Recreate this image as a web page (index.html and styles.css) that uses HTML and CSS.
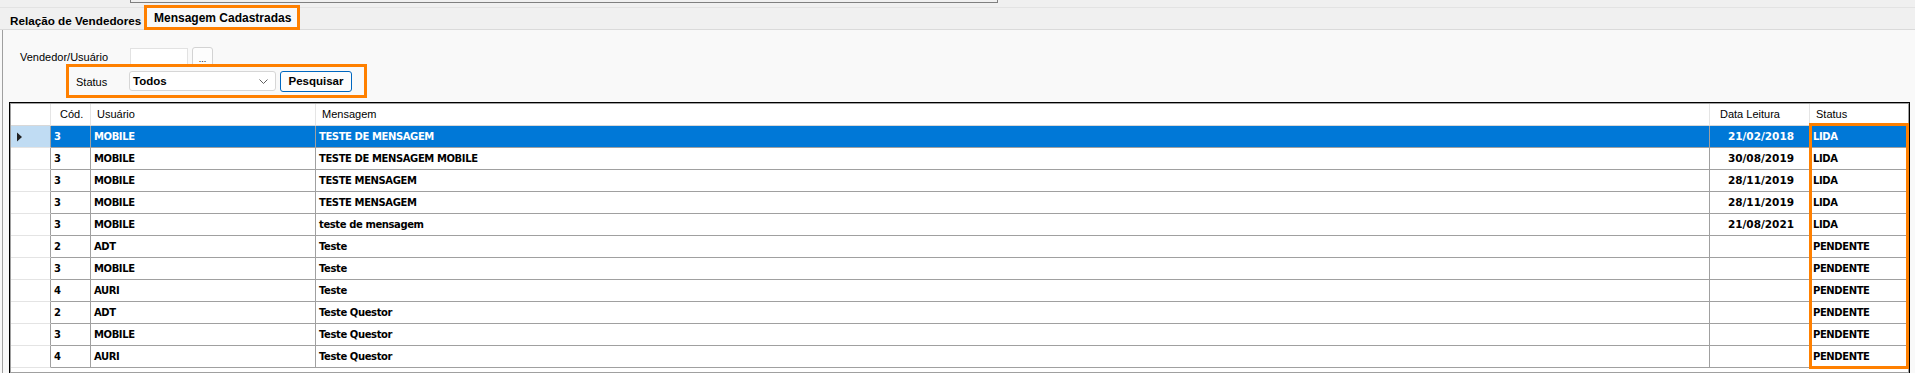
FILE: index.html
```html
<!DOCTYPE html>
<html lang="pt-BR">
<head>
    <meta charset="UTF-8">
    <meta name="viewport" content="width=device-width, initial-scale=1.0">
    <title>Mensagens Cadastradas</title>
    <link rel="stylesheet" href="styles.css">
</head>
<body>
    <div class="topbar"><div class="topbox"></div></div>

    <div class="tabs">
        <div class="tab">Relação de Vendedores</div>
        <div class="tab active">Mensagem Cadastradas</div>
    </div>

    <div class="panel">
        <div class="vendor-row">
            <label class="vendor-label">Vendedor/Usuário</label>
            <input class="text-input" type="text">
            <button class="dots">...</button>
        </div>

        <div class="status-row">
            <label class="status-label">Status</label>
            <div class="select">
                <span>Todos</span>
                <svg class="chevron" width="9" height="5" viewBox="0 0 9 5"><path d="M0.5 0.5 L4.5 4.5 L8.5 0.5" fill="none" stroke="#5f5f5f" stroke-width="1"/></svg>
            </div>
            <button class="search">Pesquisar</button>
        </div>

        <div class="grid">
            <div class="row head">
                <div class="cell rh"></div>
                <div class="cell cod">Cód.</div>
                <div class="cell">Usuário</div>
                <div class="cell">Mensagem</div>
                <div class="cell date">Data Leitura</div>
                <div class="cell">Status</div>
            </div>
            <div class="row selected">
                <div class="cell rh"><svg class="arrow" width="6" height="10" viewBox="0 0 6 10"><path d="M0 0.5 L5 5 L0 9.5 Z" fill="#222"/></svg></div>
                <div class="cell">3</div>
                <div class="cell">MOBILE</div>
                <div class="cell">TESTE DE MENSAGEM</div>
                <div class="cell date">21/02/2018</div>
                <div class="cell">LIDA</div>
            </div>
            <div class="row">
                <div class="cell rh"></div>
                <div class="cell">3</div>
                <div class="cell">MOBILE</div>
                <div class="cell">TESTE DE MENSAGEM MOBILE</div>
                <div class="cell date">30/08/2019</div>
                <div class="cell">LIDA</div>
            </div>
            <div class="row">
                <div class="cell rh"></div>
                <div class="cell">3</div>
                <div class="cell">MOBILE</div>
                <div class="cell">TESTE MENSAGEM</div>
                <div class="cell date">28/11/2019</div>
                <div class="cell">LIDA</div>
            </div>
            <div class="row">
                <div class="cell rh"></div>
                <div class="cell">3</div>
                <div class="cell">MOBILE</div>
                <div class="cell">TESTE MENSAGEM</div>
                <div class="cell date">28/11/2019</div>
                <div class="cell">LIDA</div>
            </div>
            <div class="row">
                <div class="cell rh"></div>
                <div class="cell">3</div>
                <div class="cell">MOBILE</div>
                <div class="cell">teste de mensagem</div>
                <div class="cell date">21/08/2021</div>
                <div class="cell">LIDA</div>
            </div>
            <div class="row">
                <div class="cell rh"></div>
                <div class="cell">2</div>
                <div class="cell">ADT</div>
                <div class="cell">Teste</div>
                <div class="cell date"></div>
                <div class="cell">PENDENTE</div>
            </div>
            <div class="row">
                <div class="cell rh"></div>
                <div class="cell">3</div>
                <div class="cell">MOBILE</div>
                <div class="cell">Teste</div>
                <div class="cell date"></div>
                <div class="cell">PENDENTE</div>
            </div>
            <div class="row">
                <div class="cell rh"></div>
                <div class="cell">4</div>
                <div class="cell">AURI</div>
                <div class="cell">Teste</div>
                <div class="cell date"></div>
                <div class="cell">PENDENTE</div>
            </div>
            <div class="row">
                <div class="cell rh"></div>
                <div class="cell">2</div>
                <div class="cell">ADT</div>
                <div class="cell">Teste Questor</div>
                <div class="cell date"></div>
                <div class="cell">PENDENTE</div>
            </div>
            <div class="row">
                <div class="cell rh"></div>
                <div class="cell">3</div>
                <div class="cell">MOBILE</div>
                <div class="cell">Teste Questor</div>
                <div class="cell date"></div>
                <div class="cell">PENDENTE</div>
            </div>
            <div class="row">
                <div class="cell rh"></div>
                <div class="cell">4</div>
                <div class="cell">AURI</div>
                <div class="cell">Teste Questor</div>
                <div class="cell date"></div>
                <div class="cell">PENDENTE</div>
            </div>

            <div class="highlight"></div>
        </div>
    </div>
</body>
</html>
```

FILE: styles.css
```css
* {
    box-sizing: border-box;
}
html, body {
    margin: 0;
    height: 373px;
    overflow: hidden;
}
body {
    background: #f9f9f9;
    font-family: "Liberation Sans", Arial, sans-serif;
    font-size: 11px;
    color: #000;
}
.topbar {
    height: 7px;
    background: #f0f0f0;
}
.topbox {
    margin-left: 130px;
    width: 868px;
    height: 3px;
    border: 1px solid #7f7f7f;
    border-top: none;
}
.tabs {
    display: flex;
    height: 23px;
    background: #f0f0f0;
    border-top: 1px solid #e3e3e3;
    border-bottom: 1px solid #dadada;
}
.tab {
    width: 144px;
    padding: 4px 0 0 10px;
    line-height: 17px;
    font-size: 11.7px;
    font-weight: bold;
    white-space: nowrap;
}
.tab.active {
    width: 156px;
    height: 25px;
    margin-top: -3px;
    padding: 1px 0 0 7px;
    line-height: 19px;
    font-size: 12px;
    background: #f9f9f9;
    border: 3px solid #ff8000;
}
.panel {
    margin-left: 2px;
    height: 343px;
    padding-top: 17px;
    border-left: 1px solid #a0a0a0;
}
.vendor-row {
    display: flex;
    align-items: flex-end;
    height: 20px;
    padding-left: 17px;
}
.vendor-label {
    width: 110px;
    line-height: 20px;
}
.text-input {
    width: 58px;
    height: 19px;
    margin: 0;
    padding: 0;
    background: #fff;
    border: 1px solid #e2e2e2;
    border-bottom-color: #868686;
}
.dots {
    width: 21px;
    height: 20px;
    margin-left: 4px;
    padding: 4px 0 0;
    background: #fdfdfd;
    border: 1px solid #d3d3d3;
    border-radius: 3px;
    font-family: "Liberation Sans", Arial, sans-serif;
    font-size: 9px;
    line-height: 14px;
}
.status-row {
    position: relative;
    display: flex;
    align-items: center;
    width: fit-content;
    height: 34px;
    margin: -3px 0 0 63px;
    padding: 0 12px 0 7px;
    border: 3px solid #ff8000;
}
.status-label {
    width: 53px;
    line-height: 20px;
    padding-top: 1px;
}
.select {
    display: flex;
    align-items: center;
    justify-content: space-between;
    width: 147px;
    height: 20px;
    padding: 0 7px 0 3px;
    background: #fff;
    border: 1px solid #d6d6d6;
    border-radius: 3px;
    font-size: 11.5px;
    font-weight: bold;
}
.search {
    width: 72px;
    height: 21px;
    margin-left: 4px;
    padding: 0;
    background: #fdfdfd;
    border: 1px solid #0067c0;
    border-radius: 3px;
    font-family: "Liberation Sans", Arial, sans-serif;
    font-size: 11.5px;
    font-weight: bold;
    color: #000;
}
.grid {
    position: relative;
    height: 271px;
    margin: 4px 5px 0 6px;
    padding: 1px;
    background: #fff;
    border: 1px solid #000;
    border-bottom: none;
    box-shadow: inset 0 0 0 1px #a0a0a0;
}
.row {
    display: grid;
    grid-template-columns: 40px 40px 225px 1fr 100px 98px;
    height: 22px;
}
.cell {
    padding-left: 3px;
    border-right: 1px solid #a0a0a0;
    border-bottom: 1px solid #a0a0a0;
    font-family: "DejaVu Sans", Verdana, sans-serif;
    font-size: 10px;
    font-weight: bold;
    letter-spacing: -0.4px;
    line-height: 21px;
    white-space: nowrap;
    overflow: hidden;
}
.cell:last-child {
    border-right: none;
}
.cell.rh {
    display: flex;
    align-items: center;
    padding-left: 6px;
    border-bottom-color: #e4e4e4;
}
.cell.date {
    text-align: right;
    padding-right: 15px;
    font-size: 10.5px;
    letter-spacing: 0;
}
.head .cell {
    padding-left: 6px;
    font-family: "Liberation Sans", Arial, sans-serif;
    font-size: 11px;
    font-weight: normal;
    letter-spacing: 0;
    text-align: left;
    border-right-color: #e5e5e5;
    border-bottom-color: #d8d8d8;
}
.head .cell.cod {
    padding-left: 9px;
}
.head .cell.date {
    padding-left: 10px;
}
.selected .cell {
    background: #0078d7;
    color: #fff;
}
.selected .cell.rh {
    background: #c0dcf3;
}
.highlight {
    position: absolute;
    top: 20px;
    right: 0;
    width: 100px;
    height: 246px;
    border: 3px solid #ff8000;
}
```
